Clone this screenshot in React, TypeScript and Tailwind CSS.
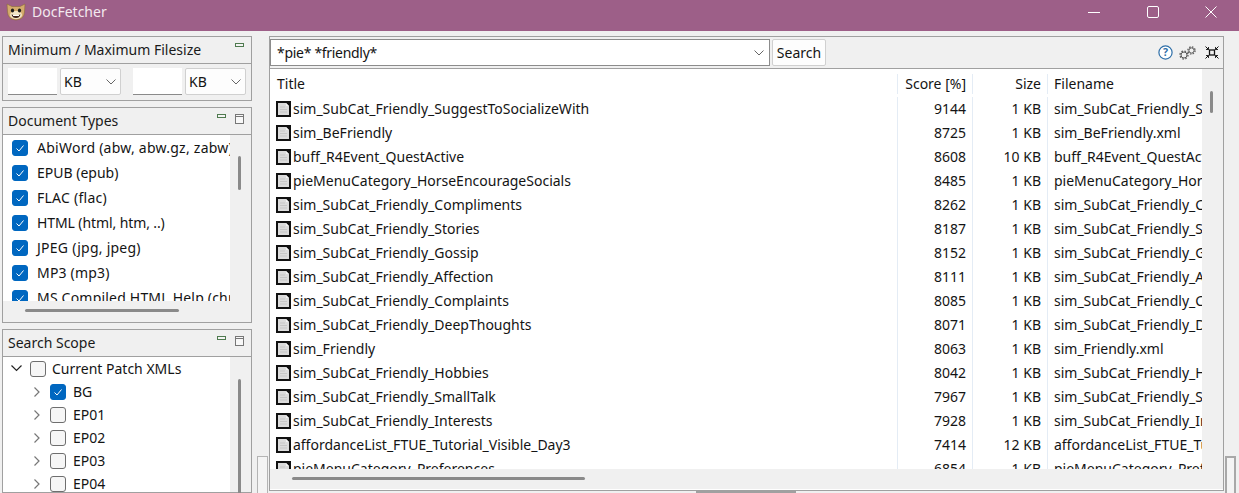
import React from 'react';

const FONT = 'font-["Noto_Sans","Open_Sans",sans-serif]';

const rows: [string, string, string, string][] = [
  ['sim_SubCat_Friendly_SuggestToSocializeWith', '9144', '1 KB', 'sim_SubCat_Friendly_SuggestToSocializeWith.xml'],
  ['sim_BeFriendly', '8725', '1 KB', 'sim_BeFriendly.xml'],
  ['buff_R4Event_QuestActive', '8608', '10 KB', 'buff_R4Event_QuestActive.xml'],
  ['pieMenuCategory_HorseEncourageSocials', '8485', '1 KB', 'pieMenuCategory_HorseEncourageSocials.xml'],
  ['sim_SubCat_Friendly_Compliments', '8262', '1 KB', 'sim_SubCat_Friendly_Compliments.xml'],
  ['sim_SubCat_Friendly_Stories', '8187', '1 KB', 'sim_SubCat_Friendly_Stories.xml'],
  ['sim_SubCat_Friendly_Gossip', '8152', '1 KB', 'sim_SubCat_Friendly_Gossip.xml'],
  ['sim_SubCat_Friendly_Affection', '8111', '1 KB', 'sim_SubCat_Friendly_Affection.xml'],
  ['sim_SubCat_Friendly_Complaints', '8085', '1 KB', 'sim_SubCat_Friendly_Complaints.xml'],
  ['sim_SubCat_Friendly_DeepThoughts', '8071', '1 KB', 'sim_SubCat_Friendly_DeepThoughts.xml'],
  ['sim_Friendly', '8063', '1 KB', 'sim_Friendly.xml'],
  ['sim_SubCat_Friendly_Hobbies', '8042', '1 KB', 'sim_SubCat_Friendly_Hobbies.xml'],
  ['sim_SubCat_Friendly_SmallTalk', '7967', '1 KB', 'sim_SubCat_Friendly_SmallTalk.xml'],
  ['sim_SubCat_Friendly_Interests', '7928', '1 KB', 'sim_SubCat_Friendly_Interests.xml'],
  ['affordanceList_FTUE_Tutorial_Visible_Day3', '7414', '12 KB', 'affordanceList_FTUE_Tutorial_Visible_Day3.xml'],
  ['pieMenuCategory_Preferences', '6854', '1 KB', 'pieMenuCategory_Preferences.xml'],
];

// HTML runs narrower than the rest in the reference, so it gets no extra tracking
const docTypes: [string, string][] = [
  ['AbiWord (abw, abw.gz, zabw)', 'tracking-[0.25px]'],
  ['EPUB (epub)', ''],
  ['FLAC (flac)', 'tracking-[0.25px]'],
  ['HTML (html, htm, ..)', 'tracking-[-0.1px]'],
  ['JPEG (jpg, jpeg)', 'tracking-[0.25px]'],
  ['MP3 (mp3)', 'tracking-[0.2px]'],
  ['MS Compiled HTML Help (chm)', 'tracking-[0.2px]'],
];

const CheckBox = ({ checked }: { checked: boolean }) => (
  <span className={`flex h-4 w-4 flex-none items-center justify-center rounded-[3px] border ${checked ? 'border-[#0067c0] bg-[#0067c0]' : 'border-[#6e6e6e] bg-[#f6f6f6]'}`}>
    {checked && (
      <svg width="10" height="10" viewBox="0 0 10 10" fill="none" stroke="white" strokeWidth="1">
        <path d="M1.5 5.5 L4 8 L8.5 2.5" />
      </svg>
    )}
  </span>
);

const MinIcon = () => <span className="block h-[4px] w-[9px] border border-[#4f7a4f] bg-[#f4f4f4]" />;
const MaxIcon = () => (
  <span className="block h-[10px] w-[9px] border border-[#777] bg-[#f8f8f8]">
    <span className="block h-[2px] border-b border-[#777]" />
  </span>
);

const PanelHeader = ({ title, max = true }: { title: string; max?: boolean }) => (
  <div className="flex h-[27px] flex-none items-center justify-between border-b border-[#a0a0a0] pl-[5px] pr-[7px] text-[14px] text-[#1a1a1a]">
    <span>{title}</span>
    <div className="mb-auto mt-[6px] flex items-start gap-[9px]">
      <MinIcon />
      {max && <MaxIcon />}
    </div>
  </div>
);

const Chevron = () => (
  <svg width="10" height="6" viewBox="0 0 10 6" fill="none" stroke="#666" strokeWidth="1"><path d="M0.5 0.5 L5 5 L9.5 0.5" /></svg>
);

const SizeField = () => (
  <div className="flex gap-[3px]">
    <span className="h-[27px] w-[49px] border-b border-[#8a8a8a] bg-white" />
    <div className="flex h-[27px] w-[61px] items-center justify-between rounded-[2px] border border-[#d0d0d0] bg-[#fdfdfd] pl-[3px] pr-[4px] text-[14px]">
      <span>KB</span>
      <Chevron />
    </div>
  </div>
);

const VBar = ({ top, height }: { top: number; height: number }) => (
  <div className="w-[21px] flex-none bg-[#f0f0f0] pl-[8px]">
    <div className="w-[3px] rounded-full bg-[#8a8a8a]" style={{ marginTop: top, height }} />
  </div>
);

const PageIcon = () => (
  <svg className="mr-[2px] flex-none" width="15" height="16" viewBox="0 0 15 16">
    <rect width="15" height="16" fill="#111" />
    <path d="M2 2 H10 L13 5 V14 H2 Z" fill="#dcdcdc" />
    <path d="M10 2 L13 5 H10 Z" fill="#f4f4f4" />
    <path d="M4 6 H9 M4 8.5 H11 M4 11 H11" stroke="#c6c6c6" />
  </svg>
);

const TreeRow = ({ label, checked }: { label: string; checked: boolean }) => (
  <div className="flex h-[23px] items-center pl-[31px]">
    <svg width="6" height="10" viewBox="0 0 6 10" fill="none" stroke="#777" strokeWidth="1.2"><path d="M0.5 0.5 L5 5 L0.5 9.5" /></svg>
    <span className="ml-[10px] mr-[7px]"><CheckBox checked={checked} /></span>
    <span>{label}</span>
  </div>
);

const CatLogo = () => (
  <svg width="20" height="18" viewBox="0 0 20 18">
    <path d="M1 1 L6 3.5 H14 L19 1 L18.5 9 Q18 16.5 10 17 Q2 16.5 1.5 9 Z" fill="#d4ab6c" stroke="#8a6a3a" strokeWidth="0.6" />
    <ellipse cx="10" cy="12" rx="6" ry="4" fill="#f3e5c6" />
    <ellipse cx="6.5" cy="7.5" rx="1.6" ry="2" fill="#1c1c1c" />
    <ellipse cx="13.5" cy="7.5" rx="1.6" ry="2" fill="#1c1c1c" />
    <path d="M5.5 11.5 Q10 13 14.5 11.5 Q13.5 15 10 15 Q6.5 15 5.5 11.5 Z" fill="#3a2018" />
    <path d="M7 12 H13 V13 H7 Z" fill="#fff" />
  </svg>
);

const GearsIcon = () => (
  <svg width="17" height="14" viewBox="0 0 17 14" fill="none" stroke="#5a5a5a">
    <circle cx="5" cy="9" r="3" strokeWidth="1" fill="#f0f0f0" />
    <circle cx="5" cy="9" r="4" strokeWidth="1.3" strokeDasharray="1.6 1.54" />
    <circle cx="12.5" cy="4.5" r="2.6" strokeWidth="1" fill="#f0f0f0" />
    <circle cx="12.5" cy="4.5" r="3.6" strokeWidth="1.3" strokeDasharray="1.5 1.33" />
  </svg>
);

const CollapseIcon = () => (
  <svg width="14" height="13" viewBox="0 0 14 13" fill="none" stroke="#111">
    <rect x="4.5" y="4" width="5" height="5" strokeWidth="1.3" />
    <path d="M0.5 0.5 L3.5 3.5 M13.5 0.5 L10.5 3.5 M0.5 12.5 L3.5 9.5 M13.5 12.5 L10.5 9.5" />
    <path d="M3.5 1 V3.5 H1 M10.5 1 V3.5 H13 M3.5 12 V9.5 H1 M10.5 12 V9.5 H13" strokeWidth="0.9" />
  </svg>
);

export default function App() {
  return (
    <div className={`${FONT} flex h-[493px] w-[1239px] flex-col overflow-hidden bg-[#f0f0f0] text-[14px] leading-[20px] text-[#141414]`}>
      {/* Title bar */}
      <div className="flex h-[31px] flex-none items-center bg-[#9d5f88] pb-[7px] pl-[6px]">
        <CatLogo />
        <span className="ml-[6px] flex-1 text-[#f3e9ef]">DocFetcher</span>
        <div className="flex items-center">
          <span className="flex w-[58px] justify-center"><span className="h-[1px] w-[12px] bg-white" /></span>
          <span className="flex w-[59px] justify-center">
            <span className="h-[12px] w-[12px] rounded-[2px] border border-white" />
          </span>
          <span className="flex w-[57px] justify-center">
            <svg width="12" height="12" viewBox="0 0 12 12" stroke="white" strokeWidth="1"><path d="M0.5 0.5 L11.5 11.5 M11.5 0.5 L0.5 11.5" /></svg>
          </span>
        </div>
      </div>

      <div className="flex min-h-0 flex-1 pl-[2px] pt-[5px]">
        {/* Left column */}
        <div className="flex w-[250px] flex-none flex-col gap-[6px]">
          <div className="h-[65px] flex-none border border-[#a0a0a0]">
            <PanelHeader title="Minimum / Maximum Filesize" max={false} />
            <div className="flex justify-between px-[5px] pt-[4px]">
              <SizeField />
              <SizeField />
            </div>
          </div>

          <div className="flex h-[216px] flex-none flex-col border border-[#a0a0a0]">
            <PanelHeader title="Document Types" />
            <div className="flex min-h-0 flex-1 bg-white">
              <div className="min-w-0 flex-1 overflow-hidden pl-[9px]">
                {docTypes.map(([label, spacing]) => (
                  <div key={label} className="flex h-[25px] items-center gap-[9px] whitespace-nowrap">
                    <CheckBox checked />
                    <span className={spacing}>{label}</span>
                  </div>
                ))}
              </div>
              <VBar top={21} height={34} />
            </div>
            <div className="h-[21px] flex-none bg-[#f0f0f0] pl-[22px] pt-[8px]">
              <div className="h-[3px] w-[154px] rounded-full bg-[#8a8a8a]" />
            </div>
          </div>

          <div className="flex min-h-0 flex-1 flex-col border border-[#a0a0a0]">
            <PanelHeader title="Search Scope" />
            <div className="flex min-h-0 flex-1 bg-white">
              <div className="min-w-0 flex-1 overflow-hidden">
                <div className="flex h-[23px] items-center pl-[8px]">
                  <svg width="11" height="7" viewBox="0 0 11 7" fill="none" stroke="#222" strokeWidth="1.2"><path d="M0.5 0.5 L5.5 5.5 L10.5 0.5" /></svg>
                  <span className="ml-[8px] mr-[6px]"><CheckBox checked={false} /></span>
                  <span>Current Patch XMLs</span>
                </div>
                <TreeRow label="BG" checked />
                <TreeRow label="EP01" checked={false} />
                <TreeRow label="EP02" checked={false} />
                <TreeRow label="EP03" checked={false} />
                <TreeRow label="EP04" checked={false} />
              </div>
              <VBar top={22} height={130} />
            </div>
          </div>
        </div>

        {/* Sash between the columns */}
        <div className="flex w-[17px] flex-none flex-col justify-end pl-[5px]">
          <div className="h-[37px] w-[11px] border border-b-0 border-[#b4b4b4] bg-[#f4f4f4]" />
        </div>

        {/* Right panel */}
        <div className="flex w-[955px] flex-none flex-col">
          <div className="flex h-[455px] flex-none flex-col border border-[#a0a0a0]">
            <div className="flex h-[32px] flex-none items-center border-b border-[#a0a0a0] pr-[4px]">
              <div className="flex h-[27px] w-[500px] items-center justify-between border border-[#8c8c8c] bg-white pl-[6px] pr-[5px]">
                <span className="tracking-[-0.3px]">*pie* *friendly*</span>
                <Chevron />
              </div>
              <button className="ml-[2px] h-[27px] w-[54px] rounded-[2px] border border-[#d0d0d0] bg-[#fdfdfd]">Search</button>
              <div className="ml-auto flex items-center">
                <svg width="15" height="15" viewBox="0 0 15 15"><circle cx="7.5" cy="7.5" r="6.6" fill="#fff" stroke="#2f6fa8" strokeWidth="1.2" /><text x="7.5" y="11.2" textAnchor="middle" fontSize="10.5" fontWeight="700" fill="#2f6fa8">?</text></svg>
                <span className="ml-[6px] block"><GearsIcon /></span>
                <span className="ml-[9px] block"><CollapseIcon /></span>
              </div>
            </div>

            <div className="flex min-h-0 flex-1 border-b border-white">
              <div className="flex min-w-0 flex-1 flex-col">
                <div className="min-h-0 flex-1 overflow-hidden bg-white">
                  <div className="flex h-[28px] items-center pt-[1px]">
                    <div className="w-[628px] flex-none border-r border-[#e4ecf5] pl-[7px]">Title</div>
                    <div className="w-[75px] flex-none border-r border-[#e4ecf5] pr-[6px] text-right">Score [%]</div>
                    <div className="w-[75px] flex-none border-r border-[#e4ecf5] pr-[6px] text-right">Size</div>
                    <div className="pl-[6px]">Filename</div>
                  </div>
                  {rows.map(([title, score, size, file]) => (
                    <div key={title} className="flex h-[24px] items-center whitespace-nowrap">
                      <div className="flex h-full w-[628px] flex-none items-center overflow-hidden border-r border-[#e4ecf5] pl-[6px]">
                        <PageIcon />
                        <span>{title}</span>
                      </div>
                      <div className="h-full w-[75px] flex-none border-r border-[#e4ecf5] pr-[6px] text-right leading-[24px]">{score}</div>
                      <div className="h-full w-[75px] flex-none border-r border-[#e4ecf5] pr-[6px] text-right leading-[24px]">{size}</div>
                      <div className="min-w-0 flex-1 overflow-hidden pl-[6px] leading-[24px]">{file}</div>
                    </div>
                  ))}
                </div>
                <div className="h-[20px] flex-none bg-[#f0f0f0] pl-[22px] pt-[8px]">
                  <div className="h-[3px] w-[293px] rounded-full bg-[#8a8a8a]" />
                </div>
              </div>
              <VBar top={22} height={22} />
            </div>
          </div>
          {/* Bottom tab peeking out under the panel */}
          <div className="ml-[427px] h-[2px] w-[100px] border-x border-t-2 border-[#a0a0a0]" />
        </div>

        {/* Sash on the right edge */}
        <div className="flex flex-1 flex-col justify-end pl-[1px] pr-[3px]">
          <div className="h-[37px] border-x-2 border-t-2 border-[#a8a8a8] bg-[#f4f4f4]" />
        </div>
      </div>
    </div>
  );
}
